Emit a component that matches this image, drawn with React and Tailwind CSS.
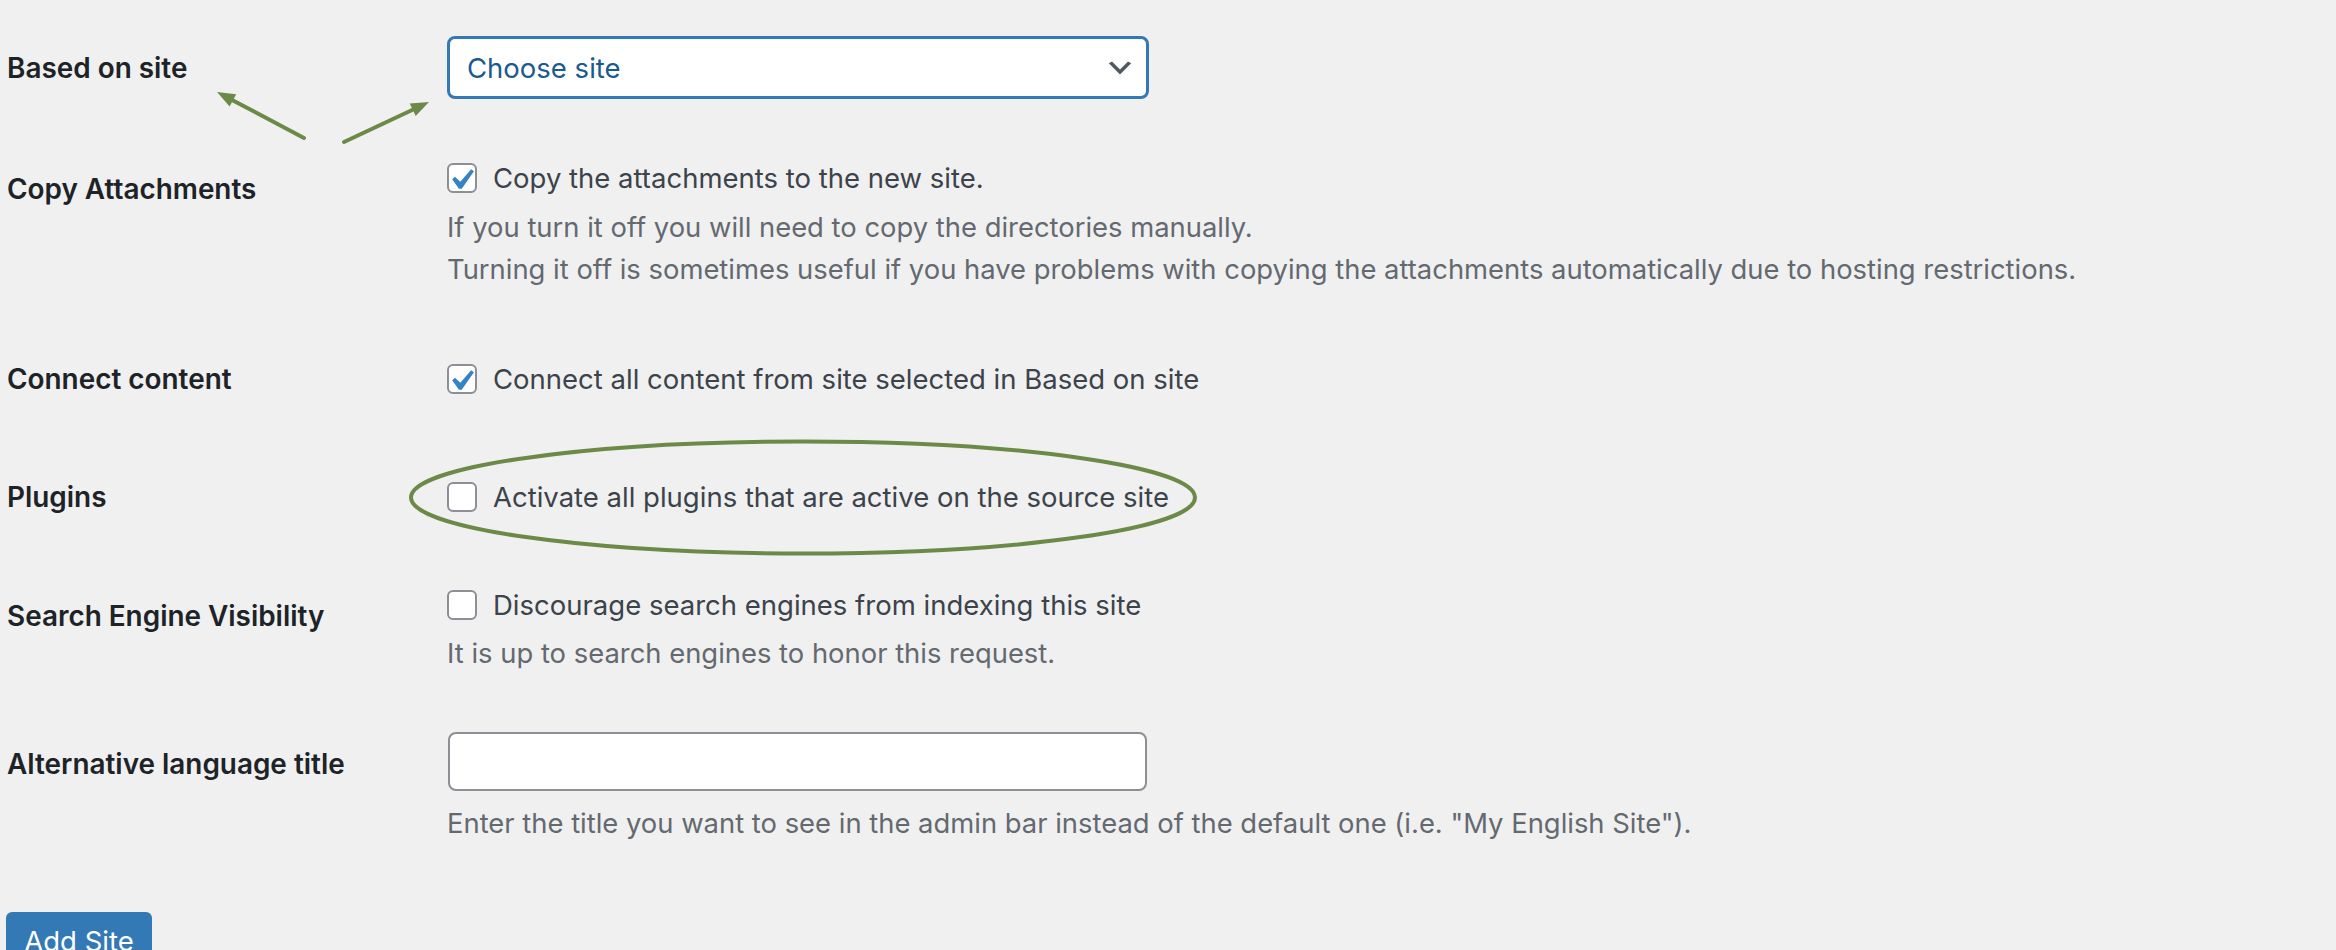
import React from "react";

function Checkbox({ checked }) {
  return (
    <span className="relative block w-[30px] h-[30px] shrink-0 rounded-[6px] border-2 border-[#8c8f94] bg-white">
      {checked && (
        <svg className="absolute left-[-9px] top-[-6px] w-[42px] h-[42px]" viewBox="0 0 20 20">
          <path d="M14.83 4.89l1.34.94-5.81 8.38H9.02L5.78 9.67l1.34-1.25 2.57 2.4z" fill="#3582c4" />
        </svg>
      )}
    </span>
  );
}

function Label({ children, pt = "" }) {
  return (
    <div className={"pl-[7px] text-[27.9px] leading-[42px] font-semibold text-[#1d2327] " + pt}>{children}</div>
  );
}

function CheckLine({ checked, children }) {
  return (
    <div className="flex items-center gap-[16px] h-[42px] text-[27.5px] text-[#3c434a]">
      <Checkbox checked={checked} />
      <span className="pt-[2px]">{children}</span>
    </div>
  );
}

export default function App() {
  return (
    <div className="relative w-full h-[950px] overflow-hidden bg-[#f0f0f1] font-[Inter,sans-serif]">
      <div className="flex flex-col">
        {/* Based on site */}
        <div className="grid grid-cols-[447px_1fr] items-center mt-[36px]">
          <Label>Based on site</Label>
          <div className="relative flex items-center w-[702px] h-[63px] rounded-[8px] border-[3px] border-[#3379b5] bg-white pl-[17px] pt-[2px] text-[27.5px] text-[#1b5a8c]">
            Choose site
            <svg className="absolute right-[10px] top-1/2 -translate-y-1/2 w-[32px] h-[32px]" viewBox="0 0 20 20">
              <path d="M5 6l5 5 5-5 2 1-7 7-7-7 2-1z" fill="#50575e" />
            </svg>
          </div>
        </div>

        {/* Copy Attachments */}
        <div className="grid grid-cols-[447px_1fr] items-start mt-[58px]">
          <Label pt="pt-[11px]">Copy Attachments</Label>
          <div>
            <CheckLine checked>Copy the attachments to the new site.</CheckLine>
            <div className="mt-[7px] text-[27.4px] leading-[42px] text-[#646970]">
              <div>If you turn it off you will need to copy the directories manually.</div>
              <div>Turning it off is sometimes useful if you have problems with copying the attachments automatically due to hosting restrictions.</div>
            </div>
          </div>
        </div>

        {/* Connect content */}
        <div className="grid grid-cols-[447px_1fr] items-start mt-[68px]">
          <Label>Connect content</Label>
          <CheckLine checked>Connect all content from site selected in Based on site</CheckLine>
        </div>

        {/* Plugins */}
        <div className="grid grid-cols-[447px_1fr] items-start mt-[76px]">
          <Label>Plugins</Label>
          <CheckLine>Activate all plugins that are active on the source site</CheckLine>
        </div>

        {/* Search Engine Visibility */}
        <div className="grid grid-cols-[447px_1fr] items-start mt-[66px]">
          <Label pt="pt-[11px]">Search Engine Visibility</Label>
          <div>
            <CheckLine>Discourage search engines from indexing this site</CheckLine>
            <div className="mt-[6px] text-[27.4px] leading-[42px] text-[#646970]">It is up to search engines to honor this request.</div>
          </div>
        </div>

        {/* Alternative language title */}
        <div className="grid grid-cols-[447px_1fr] items-start mt-[58px]">
          <Label pt="pt-[11px]">Alternative language title</Label>
          <div>
            <div className="ml-[1px] w-[699px] h-[59px] rounded-[8px] border-2 border-[#8c8f94] bg-white"></div>
            <div className="mt-[11px] text-[27.4px] leading-[42px] text-[#646970]">Enter the title you want to see in the admin bar instead of the default one (i.e. "My English Site").</div>
          </div>
        </div>

        {/* Button */}
        <div className="mt-[68px] ml-[6px]">
          <button className="flex items-center justify-center w-[146px] h-[60px] rounded-[6px] bg-[#3379b5] text-white text-[27.5px]">Add Site</button>
        </div>
      </div>

      {/* Annotations */}
      <svg className="absolute inset-0 w-full h-full pointer-events-none" viewBox="0 0 2336 950">
        <ellipse cx="803" cy="497.5" rx="392" ry="56" fill="none" stroke="#6b8a47" strokeWidth="4" />
        <line x1="304" y1="138" x2="233" y2="100.4" stroke="#6b8a47" strokeWidth="4" strokeLinecap="round" />
        <polygon points="217,92 236.2,94.2 229.6,106.6" fill="#6b8a47" />
        <line x1="344" y1="142" x2="412.7" y2="109.7" stroke="#6b8a47" strokeWidth="4" strokeLinecap="round" />
        <polygon points="429,102 415.7,116 409.7,103.4" fill="#6b8a47" />
      </svg>
    </div>
  );
}
